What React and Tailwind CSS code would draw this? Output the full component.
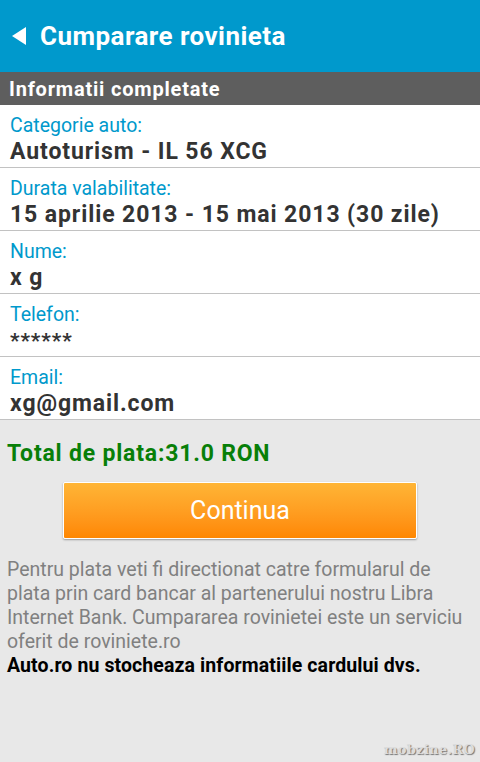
import React from 'react';

const rows = [
  { label: 'Categorie auto:', value: 'Autoturism - IL 56 XCG' },
  { label: 'Durata valabilitate:', value: '15 aprilie 2013 - 15 mai 2013 (30 zile)' },
  { label: 'Nume:', value: 'x g' },
  { label: 'Telefon:', value: '******', small: true },
  { label: 'Email:', value: 'xg@gmail.com' },
];

export default function App() {
  return (
    <div className="w-[480px] h-[762px] bg-[#e8e8e8] flex flex-col font-['Roboto',sans-serif] overflow-hidden">
      {/* action bar */}
      <div className="h-[72px] bg-[#0099cc] flex items-center pl-[12px] shrink-0">
        <svg width="15" height="18" viewBox="0 0 15 18" className="mr-[13px]">
          <path d="M14 0 L14 18 L0 9 Z" fill="#fff" />
        </svg>
        <span className="text-white text-[26px] font-bold leading-none tracking-[0.45px]">Cumparare rovinieta</span>
      </div>

      {/* section header */}
      <div className="h-[33px] bg-[#5e5e5e] flex items-center pl-[9px] shrink-0">
        <span className="text-white text-[20px] font-bold leading-none tracking-[0.8px]">Informatii completate</span>
      </div>

      {/* summary rows */}
      <div className="bg-white">
        {rows.map((r) => (
          <div key={r.label} className="h-[63px] border-b border-[#c2c2c2] pl-[10px] pt-[9px] flex flex-col">
            <span className="text-[#0099cc] text-[19.5px] leading-[24px]">{r.label}</span>
            <span className={`text-[#333333] font-bold leading-[28px] tracking-[0.9px] ${r.small ? 'text-[21px]' : 'text-[23px]'}`}>
              {r.value}
            </span>
          </div>
        ))}
      </div>

      <div className="px-[7px] pt-[20px]">
        <div className="text-[#087f08] text-[23px] font-bold leading-[28px] tracking-[0.8px]">Total de plata:31.0 RON</div>
      </div>

      <div className="flex justify-center pt-[14px]">
        <button className="w-[354px] h-[57px] rounded-[2px] bg-gradient-to-b from-[#ffb535] to-[#ff8700] border border-white shadow-[0_1px_2px_rgba(0,0,0,0.35)] text-white text-[25px]">
          Continua
        </button>
      </div>

      <div className="px-[7px] pt-[19px] text-[19.5px] leading-[24px]">
        <p className="text-[#808080]">
          Pentru plata veti fi directionat catre formularul de plata prin card bancar al partenerului nostru Libra Internet Bank. Cumpararea rovinietei este un serviciu oferit de roviniete.ro
        </p>
        <p className="text-black font-bold tracking-[0.1px]">Auto.ro nu stocheaza informatiile cardului dvs.</p>
      </div>

      <div className="flex-1" />
      <div className="flex justify-end pr-[5px] pb-[3px]">
        <span className="font-['DejaVu_Serif',serif] font-bold text-[13px] tracking-[0.3px] text-[#dcdcdc] [text-shadow:1px_1px_1px_#777]">mobzine.RO</span>
      </div>
    </div>
  );
}
